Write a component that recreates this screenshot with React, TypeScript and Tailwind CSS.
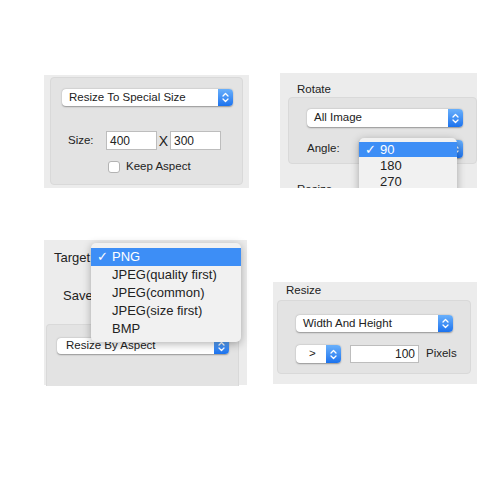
const font = { fontFamily: '"Liberation Sans", Arial, sans-serif' };

function Stepper({ w = "w-[15px]" }: { w?: string }) {
  return (
    <div className={`${w} h-full rounded-r-[4px] bg-gradient-to-b from-[#69b0fb] to-[#1a72ee] flex items-center justify-center`}>
      <svg width="7" height="11" viewBox="0 0 7 11" fill="none" stroke="white" strokeWidth="1.3" strokeLinecap="round" strokeLinejoin="round">
        <path d="M1 4 L3.5 1.5 L6 4" />
        <path d="M1 7 L3.5 9.5 L6 7" />
      </svg>
    </div>
  );
}

function Select({ label, className, textClass = "text-[11.5px]", pl = "pl-[7px]" }: { label: string; className: string; textClass?: string; pl?: string }) {
  return (
    <div className={`${className} flex bg-white rounded-[4px] shadow-[0_0.5px_1.5px_rgba(0,0,0,0.35)]`}>
      <div className={`flex-1 flex items-center ${pl} ${textClass} text-[#222]`}>{label}</div>
      <Stepper />
    </div>
  );
}

function Input({ value, className, right }: { value: string; className: string; right?: boolean }) {
  return (
    <div className={`${className} bg-white border border-[#bdbdbd] flex items-center text-[12px] text-[#222] ${right ? "justify-end pr-[3px]" : "pl-[3px]"}`}>
      {value}
    </div>
  );
}

export default function App() {
  return (
    <div className="w-[500px] h-[500px] bg-white pt-[73px] overflow-hidden" style={font}>
      {/* row 1 */}
      <div className="flex items-start">
        <div className="ml-[44px] mt-[2px] w-[205px] h-[113px] bg-[#ececec] pt-[2px] pl-[6px]">
          <div className="w-[193px] h-[108px] bg-[#e3e3e3] border border-[#d9d9d9] rounded-[4px] pt-[11px] pl-[11px]">
            <Select label="Resize To Special Size" className="w-[171px] h-[17px]" />
            <div className="mt-[25px] h-[19px] flex items-center text-[11.5px] text-[#222] leading-none">
              <span className="ml-[6px] w-[38px]">Size:</span>
              <Input value="400" className="w-[51px] h-[19px]" />
              <span className="w-[13px] text-center text-[14px] leading-none">X</span>
              <Input value="300" className="w-[51px] h-[19px]" />
            </div>
            <div className="mt-[11px] ml-[46px] h-[12px] flex items-center text-[11.5px] text-[#222] leading-none">
              <div className="w-[12px] h-[12px] bg-white border border-[#b3b3b3] rounded-[3px]" />
              <span className="ml-[6px]">Keep Aspect</span>
            </div>
          </div>
        </div>

        <div className="relative ml-[31px] w-[197px] h-[115px] bg-[#ececec] overflow-hidden">
          <div className="pl-[17px] pt-[9px] h-[15px] flex items-center text-[11.5px] text-[#222] box-content">Rotate</div>
          <div className="ml-[8px] w-[189px] h-[67px] bg-[#e3e3e3] border border-[#d9d9d9] rounded-[4px] pt-[11px] pl-[18px]">
            <Select label="All Image" className="w-[156px] h-[18px]" />
            <div className="mt-[13px] flex items-center">
              <span className="w-[52px] text-[11.5px] text-[#222]">Angle:</span>
              <Select label="" className="w-[104px] h-[18px]" />
            </div>
          </div>
          <div className="pl-[17px] mt-[17px] text-[11.5px] text-[#222]">Resize</div>
          <div className="absolute left-[79px] top-[65px] w-[98px] h-[70px] bg-[#f1f1f1] rounded-[5px] shadow-[0_2px_8px_rgba(0,0,0,0.3)] pt-[4px] text-[13px] text-[#222]">
            <div className="h-[15px] bg-[#3d8ef6] text-white flex items-center">
              <span className="w-[21px] pl-[6px]">✓</span>
              <span>90</span>
            </div>
            <div className="h-[16px] flex items-center pl-[21px] mt-[1px]">180</div>
            <div className="h-[16px] flex items-center pl-[21px]">270</div>
          </div>
        </div>
      </div>

      {/* row 2 */}
      <div className="flex items-start mt-[52px]">
        <div className="relative ml-[44px] w-[203px] h-[145px] bg-[#ececec]">
          <div className="pl-[10px] pt-[10px] h-[16px] box-content flex items-center text-[13px] text-[#222]">Target</div>
          <div className="pl-[19px] mt-[22px] h-[16px] flex items-center text-[13px] text-[#222]">Save</div>
          <div className="ml-[2px] mt-[20px] w-[193px] h-[62px] bg-[#e3e3e3] border border-[#d9d9d9] border-b-0 rounded-t-[4px] pt-[13px] pl-[10px]">
            <Select label="Resize By Aspect" className="w-[172px] h-[16px]" pl="pl-[9px]" />
          </div>
          <div className="absolute left-[47px] top-[3px] w-[150px] h-[99px] bg-[#f1f1f1] rounded-[5px] shadow-[0_2px_8px_rgba(0,0,0,0.3)] pt-[5px] text-[13px] text-[#222]">
            <div className="h-[18px] bg-[#3d8ef6] text-white flex items-center">
              <span className="w-[21px] pl-[6px]">✓</span>
              <span>PNG</span>
            </div>
            <div className="h-[18px] flex items-center pl-[21px]">JPEG(quality first)</div>
            <div className="h-[18px] flex items-center pl-[21px]">JPEG(common)</div>
            <div className="h-[18px] flex items-center pl-[21px]">JPEG(size first)</div>
            <div className="h-[18px] flex items-center pl-[21px]">BMP</div>
          </div>
        </div>

        <div className="ml-[26px] mt-[42px] w-[204px] h-[102px] bg-[#ececec] pl-[4px]">
          <div className="pl-[9px] h-[18px] flex items-center text-[11.5px] text-[#222]">Resize</div>
          <div className="w-[194px] h-[74px] bg-[#e3e3e3] border border-[#d9d9d9] rounded-[4px] pt-[14px] pl-[18px]">
            <Select label="Width And Height" className="w-[157px] h-[17px]" />
            <div className="mt-[13px] flex items-center">
              <Select label=">" className="w-[45px] h-[18px]" pl="pl-[13px]" />
              <Input value="100" right className="ml-[9px] w-[69px] h-[18px]" />
              <span className="ml-[7px] text-[11.5px] text-[#222]">Pixels</span>
            </div>
          </div>
        </div>
      </div>
    </div>
  );
}
